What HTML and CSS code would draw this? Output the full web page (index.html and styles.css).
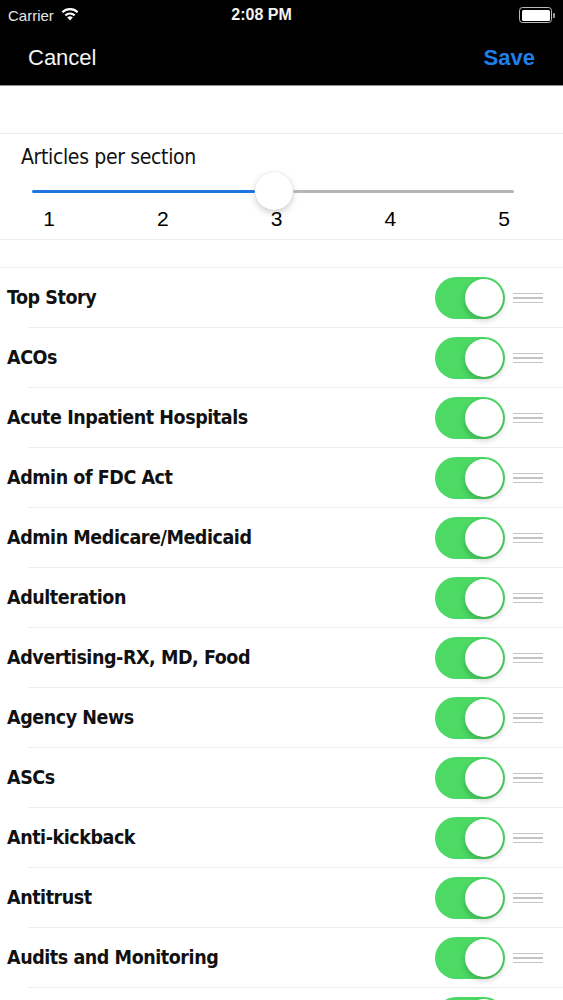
FILE: index.html
```html
<!DOCTYPE html>
<html>
<head>
<meta charset="utf-8">
<link rel="stylesheet" href="styles.css">
</head>
<body>
<div class="top">
  <div class="status">
    <div class="status-left">
      <span class="carrier">Carrier</span>
      <svg class="wifi" width="20" height="14" viewBox="0 0 20 14">
        <path d="M10 13.5 L7.2 10.4 A4.2 4.2 0 0 1 12.8 10.4 Z" fill="#fff"/>
        <path d="M4.6 7.6 A7.8 7.8 0 0 1 15.4 7.6 L13.9 9.2 A5.6 5.6 0 0 0 6.1 9.2 Z" fill="#fff"/>
        <path d="M1.6 4.5 A12 12 0 0 1 18.4 4.5 L16.9 6.1 A9.8 9.8 0 0 0 3.1 6.1 Z" fill="#fff"/>
      </svg>
    </div>
    <div class="time">2:08 PM</div>
    <div class="status-right">
      <div class="battery"><div class="battery-fill"></div></div>
      <div class="battery-nub"></div>
    </div>
  </div>
  <div class="nav">
    <span class="cancel">Cancel</span>
    <span class="save">Save</span>
  </div>
</div>

<div class="spacer-top"></div>

<div class="slider-cell">
  <div class="slider-title">Articles per section</div>
  <div class="slider">
    <div class="track-fill"></div>
    <div class="slider-thumb"></div>
    <div class="track-rest"></div>
  </div>
  <div class="ticks">
    <span>1</span><span>2</span><span>3</span><span>4</span><span>5</span>
  </div>
</div>

<div class="spacer-mid"></div>

<div class="list">
  <div class="row"><span class="label">Top Story</span><div class="toggle"><div class="knob"></div></div><div class="handle"><i></i><i></i><i></i></div></div>
  <div class="row"><span class="label">ACOs</span><div class="toggle"><div class="knob"></div></div><div class="handle"><i></i><i></i><i></i></div></div>
  <div class="row"><span class="label">Acute Inpatient Hospitals</span><div class="toggle"><div class="knob"></div></div><div class="handle"><i></i><i></i><i></i></div></div>
  <div class="row"><span class="label">Admin of FDC Act</span><div class="toggle"><div class="knob"></div></div><div class="handle"><i></i><i></i><i></i></div></div>
  <div class="row"><span class="label">Admin Medicare/Medicaid</span><div class="toggle"><div class="knob"></div></div><div class="handle"><i></i><i></i><i></i></div></div>
  <div class="row"><span class="label">Adulteration</span><div class="toggle"><div class="knob"></div></div><div class="handle"><i></i><i></i><i></i></div></div>
  <div class="row"><span class="label">Advertising-RX, MD, Food</span><div class="toggle"><div class="knob"></div></div><div class="handle"><i></i><i></i><i></i></div></div>
  <div class="row"><span class="label">Agency News</span><div class="toggle"><div class="knob"></div></div><div class="handle"><i></i><i></i><i></i></div></div>
  <div class="row"><span class="label">ASCs</span><div class="toggle"><div class="knob"></div></div><div class="handle"><i></i><i></i><i></i></div></div>
  <div class="row"><span class="label">Anti-kickback</span><div class="toggle"><div class="knob"></div></div><div class="handle"><i></i><i></i><i></i></div></div>
  <div class="row"><span class="label">Antitrust</span><div class="toggle"><div class="knob"></div></div><div class="handle"><i></i><i></i><i></i></div></div>
  <div class="row"><span class="label">Audits and Monitoring</span><div class="toggle"><div class="knob"></div></div><div class="handle"><i></i><i></i><i></i></div></div>
  <div class="row"><span class="label"></span><div class="toggle"><div class="knob"></div></div><div class="handle"><i></i><i></i><i></i></div></div>
</div>
</body>
</html>
```

FILE: styles.css
```css
html, body {
  margin: 0;
  padding: 0;
  background: #fff;
  width: 563px;
  height: 1000px;
  overflow: hidden;
}
body {
  font-family: "DejaVu Sans Condensed", "DejaVu Sans", sans-serif;
  color: #000;
}
.top {
  background: #000;
  height: 85px;
  border-bottom: 1px solid #8a8a8a;
}
.status {
  height: 30px;
  display: flex;
  align-items: center;
  justify-content: space-between;
  padding: 0 8px 0 8px;
  font-family: "Liberation Sans", Arial, sans-serif;
  color: #fff;
}
.status-left {
  display: flex;
  align-items: center;
  gap: 6px;
  width: 100px;
}
.carrier {
  font-size: 15px;
  color: #e6e6e6;
}
.wifi { margin-top: -2px; }
.time {
  font-size: 16px;
  font-weight: bold;
  color: #f2f2f2;
}
.status-right {
  display: flex;
  align-items: center;
  width: 140px;
  justify-content: flex-end;
}
.battery {
  width: 28px;
  height: 11px;
  border: 1.5px solid #bbb;
  border-radius: 3.5px;
  padding: 1.5px;
}
.battery-fill {
  width: 100%;
  height: 100%;
  background: #fff;
  border-radius: 1.5px;
}
.battery-nub {
  width: 2px;
  height: 5px;
  background: #999;
  border-radius: 0 1px 1px 0;
  margin-left: 1px;
}
.nav {
  height: 55px;
  display: flex;
  align-items: center;
  justify-content: space-between;
  padding: 0 28px 2px 28px;
  font-family: "Liberation Sans", Arial, sans-serif;
  font-size: 22px;
}
.cancel { color: #f4f4f4; }
.save { color: #1e7fe8; font-weight: bold; }

.spacer-top {
  height: 47px;
  border-bottom: 1px solid #ececec;
}
.slider-cell {
  height: 105px;
  border-bottom: 1px solid #ececec;
  display: flex;
  flex-direction: column;
}
.slider-title {
  font-size: 21px;
  letter-spacing: -0.35px;
  padding: 11px 0 0 21px;
  height: 27px;
  color: #111;
}
.slider {
  display: flex;
  align-items: center;
  margin: 0 49px 0 32px;
  height: 38px;
}
.track-fill {
  width: 223px;
  height: 3px;
  background: #1f76de;
  border-radius: 2px;
}
.slider-thumb {
  width: 38px;
  height: 38px;
  border-radius: 50%;
  background: #fff;
  box-shadow: 0 3px 7px rgba(0,0,0,0.18), 0 0 1px rgba(0,0,0,0.2);
}
.track-rest {
  flex: 1;
  height: 3px;
  background: #b6b6b6;
  border-radius: 2px;
}
.ticks {
  display: flex;
  justify-content: space-between;
  margin: -3px 39px 0 29px;
  font-family: "Liberation Sans", Arial, sans-serif;
  font-size: 21px;
}
.ticks span {
  width: 40px;
  text-align: center;
}
.spacer-mid {
  height: 27px;
  border-bottom: 1px solid #ececec;
}
.list {
  display: flex;
  flex-direction: column;
}
.row {
  height: 60px;
  display: flex;
  align-items: center;
  position: relative;
  padding-left: 7px;
}
.row::after {
  content: "";
  position: absolute;
  left: 28px;
  right: 0;
  bottom: 0;
  height: 1px;
  background: #ececec;
}
.label {
  flex: 1;
  font-size: 19.5px;
  letter-spacing: -0.45px;
  font-weight: bold;
  color: #111;
  margin-top: -2px;
}
.toggle {
  width: 70px;
  height: 42px;
  border-radius: 21px;
  background: #4cd964;
  display: flex;
  align-items: center;
  justify-content: flex-end;
  padding: 2px;
  box-sizing: border-box;
}
.knob {
  width: 38px;
  height: 38px;
  border-radius: 50%;
  background: #fff;
  box-shadow: 0 3px 6px rgba(0,0,0,0.22);
}
.handle {
  width: 30px;
  margin: 0 20px 0 8px;
  display: flex;
  flex-direction: column;
  gap: 3px;
}
.handle i {
  display: block;
  height: 1.5px;
  background: #c4c4c4;
}
```
